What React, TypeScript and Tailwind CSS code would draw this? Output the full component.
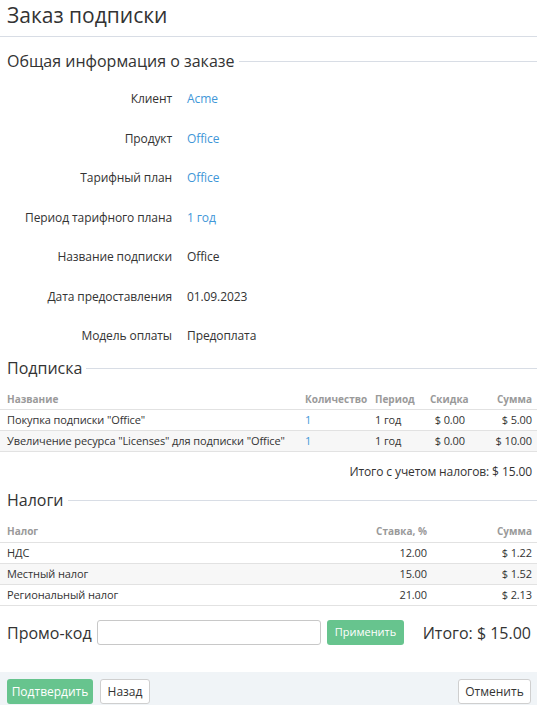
import React from "react";

const font = { fontFamily: '"Open Sans", "Noto Sans", sans-serif' };

function SectionHeading({ title }: { title: string }) {
  return (
    <div className="flex items-center pl-[7px] h-[24px]">
      <span className="text-[16px] leading-[24px] text-[#333] whitespace-nowrap">{title}</span>
      <div className="flex-1 h-px bg-[#d8dde5] ml-[4px]" />
    </div>
  );
}

const info: { label: string; value: string; link?: boolean }[] = [
  { label: "Клиент", value: "Acme", link: true },
  { label: "Продукт", value: "Office", link: true },
  { label: "Тарифный план", value: "Office", link: true },
  { label: "Период тарифного плана", value: "1 год", link: true },
  { label: "Название подписки", value: "Office" },
  { label: "Дата предоставления", value: "01.09.2023" },
  { label: "Модель оплаты", value: "Предоплата" },
];

const subs = [
  { name: 'Покупка подписки "Office"', qty: "1", period: "1 год", disc: "$ 0.00", sum: "$ 5.00" },
  { name: 'Увеличение ресурса "Licenses" для подписки "Office"', qty: "1", period: "1 год", disc: "$ 0.00", sum: "$ 10.00" },
];

const taxes = [
  { name: "НДС", rate: "12.00", sum: "$ 1.22" },
  { name: "Местный налог", rate: "15.00", sum: "$ 1.52" },
  { name: "Региональный налог", rate: "21.00", sum: "$ 2.13" },
];

export default function App() {
  return (
    <div className="w-[537px] h-[705px] bg-white text-[#333] flex flex-col overflow-hidden" style={font}>
      <div className="h-[37px] border-b border-[#d8dde5] pl-[7px]">
        <div className="text-[21px] leading-[30px] text-[#333]">Заказ подписки</div>
      </div>

      <div className="mt-[12px]">
        <SectionHeading title="Общая информация о заказе" />
      </div>

      <div className="mt-[6.5px] flex flex-col">
        {info.map((r) => (
          <div key={r.label} className="h-[39.5px] flex items-center text-[12px] tracking-[-0.1px]">
            <div className="w-[172px] text-right text-[#333]">{r.label}</div>
            <div className={"ml-[15px] " + (r.link ? "text-[#3f97d8]" : "text-[#333]")}>{r.value}</div>
          </div>
        ))}
      </div>

      <SectionHeading title="Подписка" />

      <div className="mt-[9px]">
        <div className="h-[21px] flex items-center border-b border-[#e2e2e2] pl-[7px] pr-[5px] text-[10px] font-bold text-[#9a9a9a]">
          <div className="flex-1">Название</div>
          <div className="w-[70px]">Количество</div>
          <div className="w-[55px]">Период</div>
          <div className="w-[35px] text-right">Скидка</div>
          <div className="w-[67px] text-right">Сумма</div>
        </div>
        {subs.map((r, i) => (
          <div
            key={r.name}
            className={
              "h-[21px] flex items-center border-b border-[#e2e2e2] pl-[7px] pr-[5px] text-[11px] tracking-[-0.1px] text-[#333] " +
              (i % 2 === 1 ? "bg-[#f7f7f7]" : "bg-white")
            }
          >
            <div className="flex-1 whitespace-nowrap">{r.name}</div>
            <div className="w-[70px] text-[#3f97d8]">{r.qty}</div>
            <div className="w-[55px]">{r.period}</div>
            <div className="w-[35px] text-right whitespace-nowrap">{r.disc}</div>
            <div className="w-[67px] text-right whitespace-nowrap">{r.sum}</div>
          </div>
        ))}
      </div>

      <div className="mt-[12px] h-[16px] leading-[16px] text-right pr-[5px] text-[12px] tracking-[-0.1px] text-[#333]">
        Итого с учетом налогов: $ 15.00
      </div>

      <div className="mt-[8px]">
        <SectionHeading title="Налоги" />
      </div>

      <div className="mt-[9px]">
        <div className="h-[22px] flex items-center border-b border-[#e2e2e2] pl-[7px] pr-[5px] text-[10px] font-bold text-[#9a9a9a]">
          <div className="flex-1">Налог</div>
          <div className="w-[100px] text-right">Ставка, %</div>
          <div className="w-[105px] text-right">Сумма</div>
        </div>
        {taxes.map((r, i) => (
          <div
            key={r.name}
            className={
              "h-[21px] flex items-center border-b border-[#e2e2e2] pl-[7px] pr-[5px] text-[11px] tracking-[-0.1px] text-[#333] " +
              (i % 2 === 1 ? "bg-[#f7f7f7]" : "bg-white")
            }
          >
            <div className="flex-1">{r.name}</div>
            <div className="w-[100px] text-right">{r.rate}</div>
            <div className="w-[105px] text-right">{r.sum}</div>
          </div>
        ))}
      </div>

      <div className="mt-[14px] h-[25px] flex items-center pl-[7px] pr-[6px]">
        <span className="w-[90px] text-[16px] leading-[24px] text-[#333] whitespace-nowrap">Промо-код</span>
        <input
          type="text"
          className="w-[224px] h-[25px] border border-[#c8c8c8] rounded-[3px] bg-white outline-none"
        />
        <button className="ml-[6px] w-[77px] h-[25px] rounded-[3px] bg-[#67c48e] text-white text-[11px]">
          Применить
        </button>
        <div className="flex-1" />
        <span className="text-[16px] leading-[24px] text-[#333]">Итого: $ 15.00</span>
      </div>

      <div className="mt-auto h-[33px] bg-[#f0f4f7] flex items-end pb-[1px] pl-[7px] pr-[6px]">
        <button className="w-[86px] h-[25px] rounded-[3px] bg-[#67c48e] text-white text-[12px]">
          Подтвердить
        </button>
        <button className="ml-[7px] w-[50px] h-[25px] rounded-[3px] bg-white border border-[#cfcfcf] text-[#333] text-[12px]">
          Назад
        </button>
        <div className="flex-1" />
        <button className="w-[73px] h-[25px] rounded-[3px] bg-white border border-[#cfcfcf] text-[#333] text-[12px]">
          Отменить
        </button>
      </div>
    </div>
  );
}
